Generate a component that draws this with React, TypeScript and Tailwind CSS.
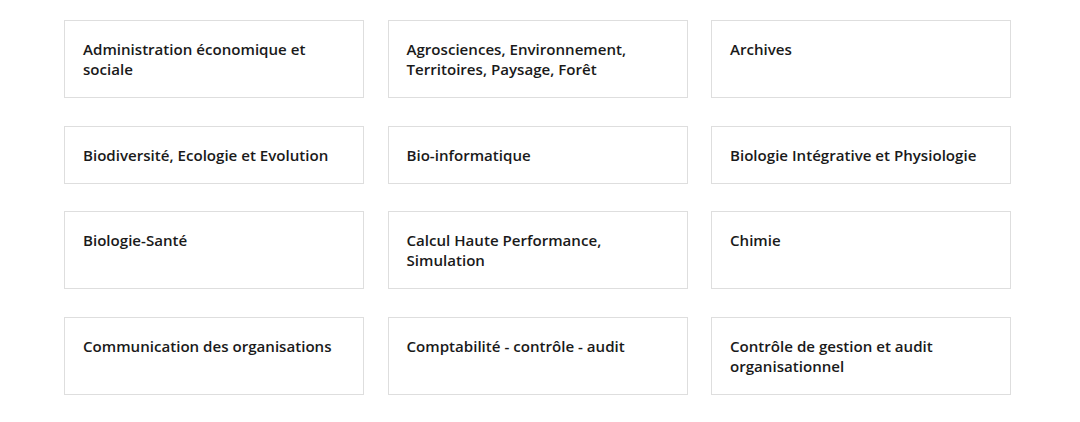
import React from 'react';

const disciplines: string[] = [
    'Administration économique et sociale',
    'Agrosciences, Environnement, Territoires, Paysage, Forêt',
    'Archives',
    'Biodiversité, Ecologie et Evolution',
    'Bio-informatique',
    'Biologie Intégrative et Physiologie',
    'Biologie-Santé',
    'Calcul Haute Performance, Simulation',
    'Chimie',
    'Communication des organisations',
    'Comptabilité - contrôle - audit',
    'Contrôle de gestion et audit organisationnel',
];

const App: React.FC = () => {
    return (
        <div className="min-h-screen bg-white pt-5 font-['Open_Sans',sans-serif]">
            <div className="ml-16 w-[947px] grid grid-cols-3 gap-x-[23.5px] gap-y-[27.5px]">
                {disciplines.map((name) => (
                    <a
                        key={name}
                        href="#"
                        className="block border border-[#dedede] bg-white px-[18px] py-[18px] text-[15.1px] leading-5 font-semibold text-[#1a1a1a]"
                    >
                        {name}
                    </a>
                ))}
            </div>
        </div>
    );
};

export default App;
